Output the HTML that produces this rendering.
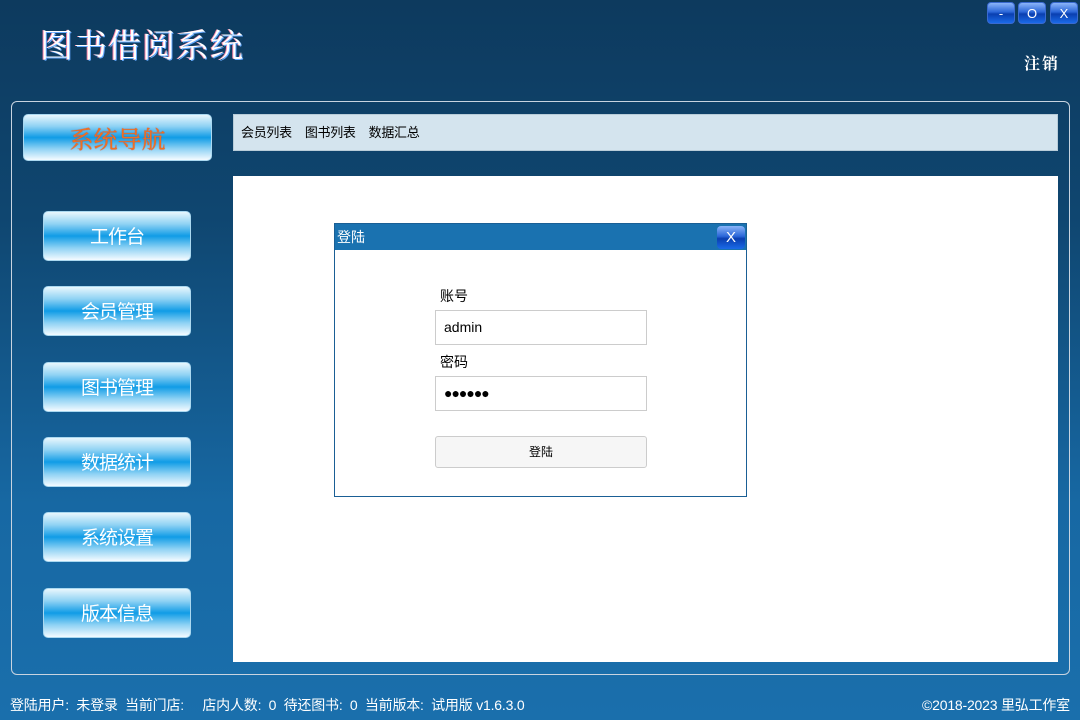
<!DOCTYPE html>
<html><head><meta charset="utf-8"><style>
*{margin:0;padding:0;box-sizing:border-box}
body{width:1080px;height:720px;overflow:hidden;font-family:"Liberation Sans","Noto Sans CJK SC",sans-serif;background:linear-gradient(#0d3a5e 0%,#0f4670 30%,#1768a3 70%,#1a6fac 100%);position:relative;color:#000}
.abs{position:absolute}
.title{left:40px;top:20px;font-family:"Noto Serif CJK SC","Liberation Serif",serif;font-size:33px;color:#fff;letter-spacing:1px;text-shadow:1px 1px 0 #6af,-1px 0 0 #f8a}
.wb{top:2px;width:28px;height:22px;border-radius:4px;background:linear-gradient(#8ab4f8 0%,#2a66d8 45%,#0a3fb0 55%,#1a6ae8 100%);color:#fff;font-size:13px;text-align:center;line-height:22px;border:1px solid #3a6ad0}
.logout{right:20px;top:51px;color:#fff;font-family:"Noto Serif CJK SC",serif;font-size:16px;font-weight:bold;letter-spacing:2px}
.frame{left:11px;top:101px;width:1059px;height:574px;border:1.5px solid #c8d4e0;border-radius:6px}
.btn{background:linear-gradient(#e8f6fd 0%,#8fd2f4 25%,#109ce6 50%,#8fd2f4 75%,#f4fbff 100%);border-radius:5px;border:1px solid #aad8f0;color:#fff;text-align:center}
.nav{left:23px;top:114px;width:189px;height:47px;font-family:"Noto Serif CJK SC",serif;font-size:24px;line-height:45px;letter-spacing:0;color:#f07020;text-shadow:0 0 1px #e03010}
.mb{left:43px;width:148px;height:50px;font-size:19px;line-height:52px;letter-spacing:-1px}
.tabs{left:233px;top:114px;width:825px;height:37px;background:#d4e4ee;border:1px solid #b8ccd8;font-size:13px;line-height:35px;padding-left:7px;letter-spacing:-0.3px}
.tabs span{margin-right:13px}
.content{left:233px;top:176px;width:825px;height:486px;background:#fff}
.dlg{left:334px;top:223px;width:413px;height:274px;border:1px solid #1a5f95;background:#fff}
.dh{height:26px;background:#1a72b0;color:#fff;font-size:14px;line-height:26px;padding-left:2px}
.dx{right:1px;top:2px;width:28px;height:23px;border-radius:4px;background:linear-gradient(#8ab4f8,#2a66d8 45%,#0a3fb0 55%,#1a6ae8);color:#fff;text-align:center;line-height:23px;font-size:15px}
.lbl{font-size:14px;left:105px}
.inp{left:100px;width:212px;height:35px;border:1px solid #ccc;font-size:14px;line-height:33px;padding-left:8px}
.lb{left:100px;top:212px;width:212px;height:32px;background:#f6f6f6;border:1px solid #ccc;border-radius:3px;font-size:12px;text-align:center;line-height:30px}
.status{left:10px;top:695px;color:#fff;font-size:14px;letter-spacing:-0.2px}
</style></head><body>
<div class="abs title">图书借阅系统</div>
<div class="abs wb" style="left:987px">-</div>
<div class="abs wb" style="left:1018px">O</div>
<div class="abs wb" style="left:1050px">X</div>
<div class="abs logout">注销</div>
<div class="abs frame"></div>
<div class="abs btn nav">系统导航</div>
<div class="abs btn mb" style="top:211px">工作台</div>
<div class="abs btn mb" style="top:286px">会员管理</div>
<div class="abs btn mb" style="top:362px">图书管理</div>
<div class="abs btn mb" style="top:437px">数据统计</div>
<div class="abs btn mb" style="top:512px">系统设置</div>
<div class="abs btn mb" style="top:588px">版本信息</div>
<div class="abs tabs"><span>会员列表</span><span>图书列表</span><span>数据汇总</span></div>
<div class="abs content"></div>
<div class="abs dlg">
<div class="dh">登陆</div>
<div class="abs dx">X</div>
<div class="abs lbl" style="top:62px">账号</div>
<div class="abs inp" style="top:86px">admin</div>
<div class="abs lbl" style="top:128px">密码</div>
<div class="abs inp" style="top:152px;font-size:14px;letter-spacing:-1px">●●●●●●</div>
<div class="abs lb">登陆</div>
</div>
<div class="abs status">登陆用户:&nbsp;&nbsp;未登录&nbsp;&nbsp;当前门店:&nbsp;&nbsp;&nbsp;&nbsp;&nbsp;店内人数:&nbsp;&nbsp;0&nbsp;&nbsp;待还图书:&nbsp;&nbsp;0&nbsp;&nbsp;当前版本:&nbsp;&nbsp;试用版 v1.6.3.0</div>
<div class="abs status" style="left:auto;right:10px">©2018-2023 里弘工作室</div>
</body></html>
